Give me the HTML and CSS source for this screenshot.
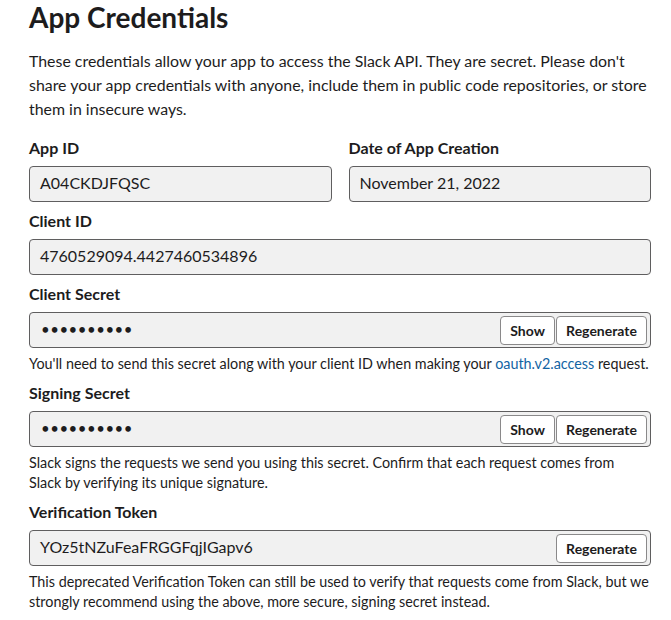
FILE: index.html
```html
<!DOCTYPE html>
<html>
<head>
<meta charset="utf-8">
<link rel="stylesheet" href="styles.css">
</head>
<body>
<div class="page">
  <h1 class="title">App Credentials</h1>
  <p class="intro">These credentials allow your app to access the Slack API. They are secret. Please don't share your app credentials with anyone, include them in public code repositories, or store them in insecure ways.</p>

  <div class="row">
    <div class="field">
      <div class="label">App ID</div>
      <div class="input"><span class="value">A04CKDJFQSC</span></div>
    </div>
    <div class="field">
      <div class="label">Date of App Creation</div>
      <div class="input"><span class="value">November 21, 2022</span></div>
    </div>
  </div>

  <div class="field">
    <div class="label">Client ID</div>
    <div class="input"><span class="value">4760529094.4427460534896</span></div>
  </div>

  <div class="field">
    <div class="label">Client Secret</div>
    <div class="input">
      <span class="value dots">••••••••••</span>
      <div class="actions"><button class="btn btn-show">Show</button><button class="btn">Regenerate</button></div>
    </div>
    <p class="help">You'll need to send this secret along with your client ID when making your <a class="link" href="#">oauth.v2.access</a> request.</p>
  </div>

  <div class="field">
    <div class="label">Signing Secret</div>
    <div class="input">
      <span class="value dots">••••••••••</span>
      <div class="actions"><button class="btn btn-show">Show</button><button class="btn">Regenerate</button></div>
    </div>
    <p class="help">Slack signs the requests we send you using this secret. Confirm that each request comes from<br>Slack by verifying its unique signature.</p>
  </div>

  <div class="field">
    <div class="label">Verification Token</div>
    <div class="input">
      <span class="value">YOz5tNZuFeaFRGGFqjIGapv6</span>
      <div class="actions"><button class="btn">Regenerate</button></div>
    </div>
    <p class="help">This deprecated Verification Token can still be used to verify that requests come from Slack, but we strongly recommend using the above, more secure, signing secret instead.</p>
  </div>
</div>
</body>
</html>
```

FILE: styles.css
```css
* { box-sizing: border-box; }
body {
  margin: 0;
  background: #ffffff;
  color: #1d1c1d;
  font-family: Lato, "Noto Sans", sans-serif;
}
.page {
  width: 651px;
  padding-left: 29px;
}
.title {
  margin: 0;
  font-size: 28px;
  line-height: 34px;
  font-weight: 700;
}
.intro {
  margin: 15px -3px 0 0;
  font-size: 15.9px;
  line-height: 24px;
}
.row {
  display: grid;
  grid-template-columns: 1fr 1fr;
  column-gap: 17px;
  margin-top: 16px;
}
.row .field { margin-top: 0; }
.field { margin-top: 8px; }
.label {
  font-size: 16px;
  line-height: 22px;
  font-weight: 700;
}
.input {
  margin-top: 7px;
  height: 36px;
  display: flex;
  align-items: center;
  justify-content: space-between;
  background: #f1f1f1;
  border: 1px solid #5f5e5f;
  border-radius: 4px;
  padding: 0 3px 0 10px;
}
.value {
  font-size: 16px;
  margin-bottom: 4px;
}
.dots {
  font-size: 15px;
  letter-spacing: 0.5px;
  margin-bottom: 2px;
  margin-left: 1px;
}
.actions {
  display: flex;
  gap: 1px;
}
.btn {
  height: 29px;
  padding: 0 9px;
  background: #ffffff;
  border: 1px solid #8a898a;
  border-radius: 4px;
  font-family: Lato, "Noto Sans", sans-serif;
  font-size: 14px;
  font-weight: 700;
  color: #1d1c1d;
}
.btn-show { min-width: 55px; }
.help {
  margin: 6px 0 4px;
  font-size: 14.35px;
  line-height: 20px;
}
.link {
  color: #1264a3;
  text-decoration: none;
}
```
